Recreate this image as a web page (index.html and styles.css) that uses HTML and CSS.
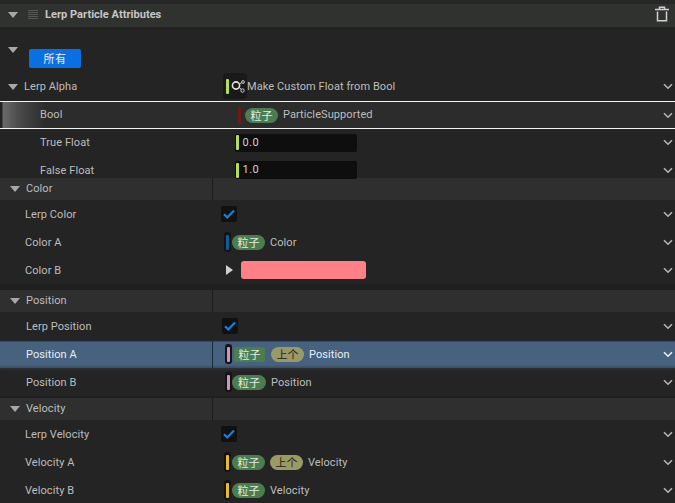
FILE: index.html
```html
<!DOCTYPE html>
<html lang="zh">
<head>
<meta charset="utf-8">
<title>Lerp Particle Attributes</title>
<link rel="stylesheet" href="styles.css">
</head>
<body>
<svg class="defs" width="0" height="0" aria-hidden="true">
  <symbol id="chev" viewBox="0 0 10 7"><path d="M1 1.2 5 5.2 9 1.2" fill="none" stroke="currentColor" stroke-width="1.6"/></symbol>
  <symbol id="tri" viewBox="0 0 10 6"><path d="M0 0H10L5 6Z" fill="currentColor"/></symbol>
  <symbol id="check" viewBox="0 0 12 10"><path d="M1 5.2 4.3 8.4 11 1.4" fill="none" stroke="currentColor" stroke-width="2.2"/></symbol>
</svg>
<main class="panel">
  <header class="title">
    <svg class="tri tri-title"><use href="#tri"/></svg>
    <svg class="grip" viewBox="0 0 10 9"><path d="M0 .5H10M0 2.5H10M0 4.5H10M0 6.5H10M0 8.5H10" stroke="#565856" stroke-width="1"/></svg>
    <span class="title-text">Lerp Particle Attributes</span>
    <svg class="trash" viewBox="0 0 14 16"><path d="M0 3.5H14M4.5 3V1.2H9.5V3M2.5 5.5V14.7H11.5V5.5" fill="none" stroke="#d0d0d0" stroke-width="1.5"/></svg>
  </header>
  <div class="filter">
    <svg class="tri tri-filter"><use href="#tri"/></svg>
    <button class="all-btn">所有</button>
  </div>

  <div class="row row-alpha">
    <div class="label pl-alpha"><svg class="tri tri-alpha"><use href="#tri"/></svg>Lerp Alpha</div>
    <div class="value v-alpha">
      <span class="node-box"><i class="bar bar-float"></i>
        <svg class="node-icon" viewBox="0 0 14 14"><circle cx="5" cy="6.5" r="3.6" fill="none" stroke="#e4e4e4" stroke-width="1.6"/><circle cx="12" cy="3" r="1.4" fill="none" stroke="#d0d0d0"/><circle cx="11.5" cy="11.5" r="1.7" fill="none" stroke="#d0d0d0"/><path d="M8.5 5 10.8 3.6M8.2 8.5 10.2 10.4" stroke="#d0d0d0"/></svg>
      </span>
      <span>Make Custom Float from Bool</span>
    </div>
    <svg class="chev"><use href="#chev"/></svg>
  </div>
  <div class="row row-bool">
    <div class="label pl-sub">Bool</div>
    <div class="value v-bool">
      <i class="bar bar-bool"></i><span class="pill pill-green">粒子</span><span>ParticleSupported</span>
    </div>
    <svg class="chev"><use href="#chev"/></svg>
  </div>
  <div class="row row-true">
    <div class="label pl-sub">True Float</div>
    <div class="value v-input"><span class="num-input"><i class="bar bar-float"></i>0.0</span></div>
    <svg class="chev"><use href="#chev"/></svg>
  </div>
  <div class="row row-last">
    <div class="label pl-sub">False Float</div>
    <div class="value v-input"><span class="num-input"><i class="bar bar-float"></i>1.0</span></div>
    <svg class="chev"><use href="#chev"/></svg>
  </div>

  <section>
    <div class="head"><div class="label pl-head"><svg class="tri tri-head"><use href="#tri"/></svg>Color</div></div>
    <div class="row">
      <div class="label pl-a">Lerp Color</div>
      <div class="value v-a"><span class="checkbox"><svg class="tick"><use href="#check"/></svg></span></div>
      <svg class="chev"><use href="#chev"/></svg>
    </div>
    <div class="row">
      <div class="label pl-a">Color A</div>
      <div class="value v-a"><span class="pin"><i class="bar bar-color"></i></span><span class="pill pill-green">粒子</span><span class="name">Color</span></div>
      <svg class="chev"><use href="#chev"/></svg>
    </div>
    <div class="row">
      <div class="label pl-a">Color B</div>
      <div class="value v-a v-swatch"><span class="arrow"></span><span class="swatch"></span></div>
      <svg class="chev"><use href="#chev"/></svg>
    </div>
  </section>

  <section class="sec-pos">
    <div class="head"><div class="label pl-b"><svg class="tri tri-head"><use href="#tri"/></svg>Position</div></div>
    <div class="row">
      <div class="label pl-b">Lerp Position</div>
      <div class="value v-b"><span class="checkbox"><svg class="tick"><use href="#check"/></svg></span></div>
      <svg class="chev"><use href="#chev"/></svg>
    </div>
    <div class="row row-selected">
      <div class="label pl-b">Position A</div>
      <div class="value v-b"><span class="pin"><i class="bar bar-pos"></i></span><span class="pill pill-flat">粒子</span><span class="pill pill-olive">上个</span><span class="name">Position</span></div>
      <svg class="chev"><use href="#chev"/></svg>
    </div>
    <div class="row">
      <div class="label pl-b">Position B</div>
      <div class="value v-b"><span class="pin"><i class="bar bar-pos"></i></span><span class="pill pill-green pill-wide">粒子</span><span class="name">Position</span></div>
      <svg class="chev"><use href="#chev"/></svg>
    </div>
  </section>

  <section class="sec-vel">
    <div class="head"><div class="label pl-head"><svg class="tri tri-head"><use href="#tri"/></svg>Velocity</div></div>
    <div class="row">
      <div class="label pl-a">Lerp Velocity</div>
      <div class="value v-a"><span class="checkbox"><svg class="tick"><use href="#check"/></svg></span></div>
      <svg class="chev"><use href="#chev"/></svg>
    </div>
    <div class="row">
      <div class="label pl-a">Velocity A</div>
      <div class="value v-a"><span class="pin"><i class="bar bar-vel"></i></span><span class="pill pill-green">粒子</span><span class="pill pill-olive">上个</span><span class="name">Velocity</span></div>
      <svg class="chev"><use href="#chev"/></svg>
    </div>
    <div class="row">
      <div class="label pl-a">Velocity B</div>
      <div class="value v-a"><span class="pin"><i class="bar bar-vel"></i></span><span class="pill pill-green">粒子</span><span class="name">Velocity</span></div>
      <svg class="chev"><use href="#chev"/></svg>
    </div>
  </section>
</main>
</body>
</html>
```
FILE: styles.css
```css
* { box-sizing: border-box; }
html, body { margin: 0; height: 100%; overflow: hidden; }
body {
  background: #242424;
  color: #bdbdbd;
  font: 11px/14px Roboto, "Noto Sans CJK SC", sans-serif;
  letter-spacing: .08px;
}
.defs { display: block; height: 0; }
.panel { width: 675px; height: 503px; overflow: hidden; }

.title {
  height: 27px;
  border-top: 4px solid #262726;
  background: #303230;
  display: flex;
  align-items: center;
  padding: 0 6px 2px 8px;
  color: #c6c6c6;
}
.tri { display: block; flex: none; color: #a8a8a8; width: 10px; height: 6px; }
.tri-title { margin-right: 10px; }
.grip { width: 10px; height: 9px; margin-right: 7px; flex: none; }
.title-text { font-weight: 700; letter-spacing: .04px; flex: 1; }
.trash { width: 14px; height: 16px; flex: none; margin-bottom: 1px; }

.filter {
  height: 45px;
  display: flex;
  align-items: flex-start;
  padding: 20px 0 0 8px;
}
.tri-filter { margin-right: 11px; }
.all-btn {
  width: 52px;
  height: 19px;
  margin-top: 2px;
  padding: 0;
  border: 0;
  border-radius: 2px;
  background: #0a70e2;
  color: #f2f2f2;
  font: 11px/19px "Noto Sans CJK SC", sans-serif;
  letter-spacing: .5px;
}

.row { height: 28px; display: flex; align-items: center; }
.row-alpha { padding-top: 1px; }
.row-true { height: 27px; }
.row-last { height: 22px; align-items: flex-start; padding-top: 5px; }
.row-last .label { margin-top: 3px; }
.row-last .chev { margin-top: 6px; }
.label { width: 213px; flex: none; display: flex; align-items: center; }
section .row .label { padding-top: 2px; }
.name { padding-top: 2px; }
.value { flex: 1; display: flex; align-items: center; min-width: 0; white-space: nowrap; }
.chev { width: 10px; height: 7px; margin-right: 2px; flex: none; color: #b4b4b4; }

.pl-alpha { padding-left: 8px; }
.tri-alpha { margin-right: 6px; }
.pl-sub { padding-left: 40px; }
.pl-head { padding-left: 10px; }
.tri-head { margin-right: 6px; }
.pl-a { padding-left: 25px; }
.pl-b { padding-left: 26px; }
.sec-pos .head .pl-b { padding-left: 10px; }
.head .label { height: 100%; border-right: 1px solid #1c1c1c; padding-bottom: 1px; }

.head {
  height: 22px;
  background: #2f2f2f;
  display: flex;
  align-items: stretch;
}
.sec-pos { margin-top: 6px; box-shadow: 0 -6px 0 #1f1f1f; }
.sec-vel { margin-top: 2px; box-shadow: 0 -2px 0 #1f1f1f; }

.v-alpha { padding-left: 10px; gap: 0; }
.node-box {
  width: 24px;
  height: 26px;
  margin-top: -1px;
  background: #191919;
  border-radius: 4px;
  display: flex;
  align-items: center;
  padding-left: 3px;
  gap: 2px;
  flex: none;
}
.node-icon { width: 14px; height: 14px; flex: none; }
.bar { display: block; flex: none; width: 2.5px; height: 15px; border-radius: 1px; }
.bar-float { background: #b9dc55; }
.bar-bool { background: #6d1a1a; height: 17px; width: 3px; }
.bar-color { background: #14599c; }
.bar-pos { background: #d88fc8; }
.bar-vel { background: #e8bb22; }

.v-bool { padding-left: 25px; gap: 5px; }
.v-bool .pill { margin-left: -1px; }
.pin {
  width: 7px;
  height: 20px;
  flex: none;
  background: #141414;
  border-radius: 3px;
  display: flex;
  align-items: center;
  justify-content: center;
}
.pill {
  width: 33px;
  height: 15px;
  flex: none;
  border-radius: 8px;
  text-align: center;
  font: 11px/15px "Noto Sans CJK SC", sans-serif;
  letter-spacing: 0;
}
.pill-green { background: #4c7d50; color: #e4ece2; }
.pill-wide { width: 34px; }
.pill-flat {
  width: 31px;
  margin-left: 2px;
  margin-right: 1px;
  border-radius: 2px;
  background: #4c7d50;
  color: #e4ece2;
}
.pill-olive { background: #9a9a66; color: #22221a; }

.v-a, .v-b { gap: 5px; }
.v-a { padding-left: 11px; }
.v-b { padding-left: 12px; }
.v-a .pin { margin-right: -4px; }
.v-b .pin { margin-right: -5px; }

.checkbox {
  width: 16px;
  height: 16px;
  margin-left: -3px;
  background: #111;
  border-radius: 2px;
  display: flex;
  align-items: center;
  justify-content: center;
  color: #1a7ee0;
}
.tick { width: 12px; height: 10px; }

.v-swatch { gap: 8px; }
.arrow {
  width: 0;
  height: 0;
  margin-left: 2px;
  border-left: 7px solid #cfcfcf;
  border-top: 5px solid transparent;
  border-bottom: 5px solid transparent;
  flex: none;
}
.swatch { width: 125px; height: 18px; border-radius: 3px; background: #ff8087; flex: none; }

.v-input { padding-left: 22px; }
.num-input {
  width: 122px;
  height: 18px;
  background: #0e0e0e;
  border-radius: 2px;
  display: flex;
  align-items: center;
  gap: 4px;
  padding-left: 1px;
  color: #d2d2d2;
  letter-spacing: .5px;
}

.row-bool {
  margin-top: 1px;
  border-top: 1px solid #f4f4f4;
  border-bottom: 1px solid #f4f4f4;
  background: linear-gradient(90deg, #242424 2px, #6a6a6a 3px, #464646 22px, #2c2c2c 45px, #2c2c2c);
}
.row-selected {
  background: linear-gradient(180deg, #22262c 0, #22303f 1px, #46627e 2px, #46627e 25px, #3b4c5c 28px);
  box-shadow: 0 2px 2px #2c3136;
  color: #e8eef4;
}
.row-selected .label { height: 100%; border-right: 1px solid #1c2b3a; }
.row-selected .chev { color: #e8eef4; }
```
